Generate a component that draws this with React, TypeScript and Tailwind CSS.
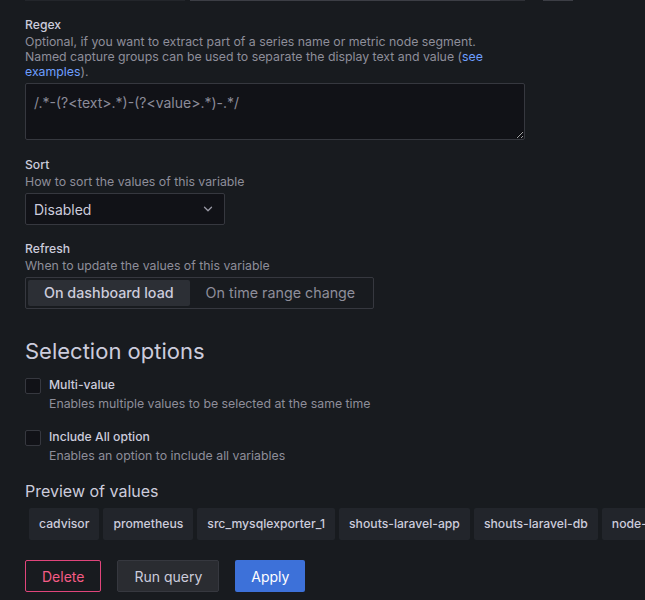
import React from "react";
import { ChevronDown } from "lucide-react";

function Label({ children }: { children: React.ReactNode }) {
  return <div className="text-[12.2px] leading-[15px] font-medium text-[#ccccdc]">{children}</div>;
}
function Desc({ children }: { children: React.ReactNode }) {
  return <div className="mt-[2px] text-[12.3px] leading-[15px] text-[#8e8e9a]">{children}</div>;
}

const chips = [
  "cadvisor",
  "prometheus",
  "src_mysqlexporter_1",
  "shouts-laravel-app",
  "shouts-laravel-db",
  "node-exporter",
];

export default function App() {
  return (
    <div className="w-[645px] h-[600px] overflow-hidden bg-[#181b1f] text-[#ccccdc] font-['Inter','Noto_Sans',sans-serif]">
      {/* cut-off bottom edges of the controls above */}
      <div className="flex h-px">
        <div className="ml-[25px] w-[160px] bg-[#23262b]" />
        <div className="ml-[5px] w-[310px] bg-[#3c3e45]" />
        <div className="w-[25px] bg-[#2f3137]" />
        <div className="ml-[18px] w-[30px] bg-[#3c3e45]" />
      </div>

      <div className="pl-[25px]">
        {/* Regex */}
        <div className="mt-[16px]">
          <Label>Regex</Label>
          <Desc>
            Optional, if you want to extract part of a series name or metric node segment.
            <br />
            Named capture groups can be used to separate the display text and value (
            <span className="text-[#6e9fff]">see</span>
            <br />
            <span className="text-[#6e9fff]">examples</span>).
          </Desc>
          <textarea
            className="mt-[4px] block w-[500px] h-[57px] bg-[#111217] border border-[#36383f] rounded-[2px] px-[8px] py-[9px] text-[14px] leading-[20px] text-[#ccccdc] placeholder:text-[#8b8b99] outline-none resize-y [color-scheme:dark]"
            placeholder="/.*-(?<text>.*)-(?<value>.*)-.*/"
          />
        </div>

        {/* Sort */}
        <div className="mt-[17px]">
          <Label>Sort</Label>
          <Desc>How to sort the values of this variable</Desc>
          <div className="mt-[4px] flex items-center justify-between w-[200px] h-[32px] bg-[#111217] border border-[#36383f] rounded-[2px] pl-[8px] pr-[9px]">
            <span className="text-[14px] text-[#ccccdc]">Disabled</span>
            <ChevronDown size={14} strokeWidth={2.2} className="text-[#9a9aa6]" />
          </div>
        </div>

        {/* Refresh */}
        <div className="mt-[16px]">
          <Label>Refresh</Label>
          <Desc>When to update the values of this variable</Desc>
          <div className="mt-[4px] inline-flex h-[32px] p-[2px] border border-[#36383f] rounded-[2px]">
            <div className="flex items-center px-[16px] h-[26px] bg-[#2c2f35] rounded-[2px] text-[14.3px] font-medium text-[#ccccdc]">
              On dashboard load
            </div>
            <div className="flex items-center px-[16px] h-[26px] text-[14.3px] text-[#8e8e9a]">
              On time range change
            </div>
          </div>
        </div>

        {/* Selection options */}
        <div className="mt-[28px] text-[22px] leading-[28px] text-[#ccccdc]">Selection options</div>

        <div className="mt-[13px] flex gap-[8px]">
          <div className="w-[16px] h-[16px] shrink-0 bg-[#111217] border border-[#36383f] rounded-[2px]" />
          <div className="-mt-[1px]">
            <Label>Multi-value</Label>
            <div className="mt-[4px] text-[12.3px] leading-[15px] text-[#8e8e9a]">
              Enables multiple values to be selected at the same time
            </div>
          </div>
        </div>

        <div className="mt-[19px] flex gap-[8px]">
          <div className="w-[16px] h-[16px] shrink-0 bg-[#111217] border border-[#36383f] rounded-[2px]" />
          <div className="-mt-[1px]">
            <Label>Include All option</Label>
            <div className="mt-[4px] text-[12.3px] leading-[15px] text-[#8e8e9a]">
              Enables an option to include all variables
            </div>
          </div>
        </div>

        {/* Preview */}
        <div className="mt-[17px] text-[16px] leading-[22px] text-[#ccccdc]">Preview of values</div>
        <div className="mt-[6px] flex gap-[4px] pl-[4px] overflow-hidden">
          {chips.map((c) => (
            <div
              key={c}
              className="shrink-0 flex items-center h-[32px] px-[10px] bg-[#22252b] rounded-[2px] text-[12.2px] font-medium text-[#ccccdc]"
            >
              {c}
            </div>
          ))}
        </div>

        {/* Buttons */}
        <div className="mt-[20px] flex gap-[16px]">
          <button className="h-[32px] px-[16px] border border-[#e0457b] rounded-[2px] text-[14px] text-[#f55b85]">
            Delete
          </button>
          <button className="h-[32px] px-[16px] border border-[#36383f] bg-[#2a2c31] rounded-[2px] text-[14px] text-[#ccccdc]">
            Run query
          </button>
          <button className="h-[32px] px-[16px] bg-[#3d71d9] rounded-[2px] text-[14px] text-white">
            Apply
          </button>
        </div>
      </div>
    </div>
  );
}
